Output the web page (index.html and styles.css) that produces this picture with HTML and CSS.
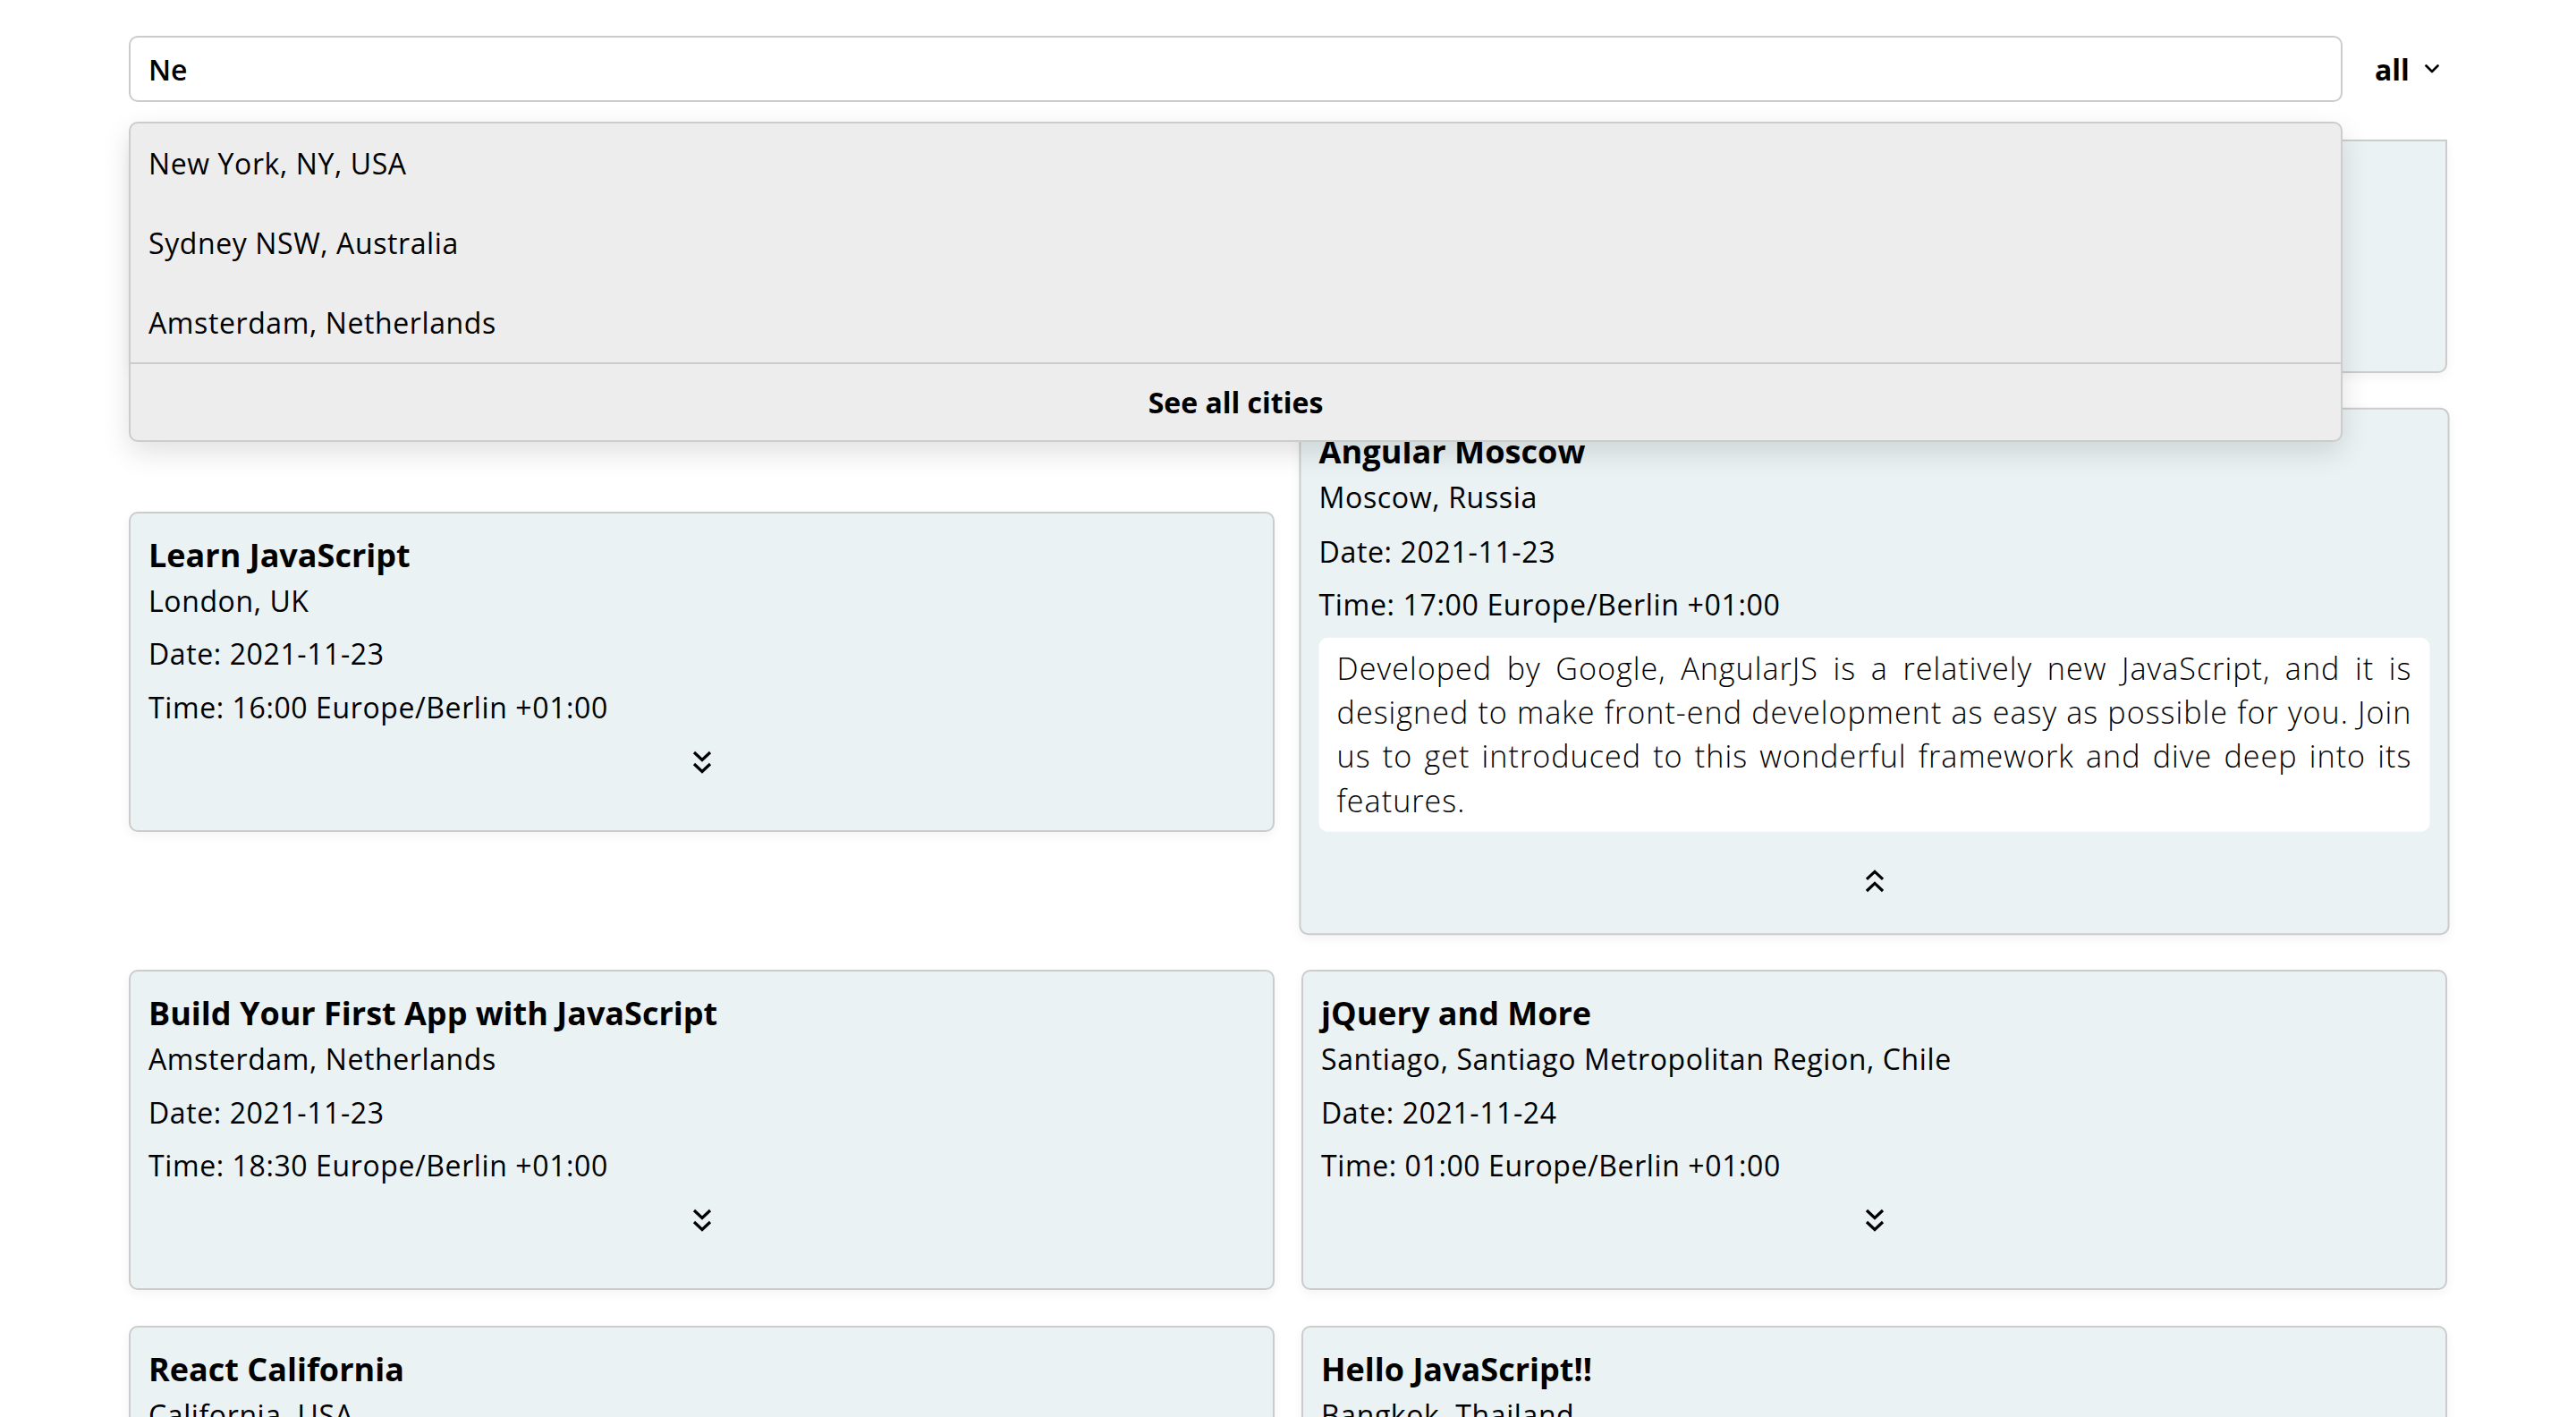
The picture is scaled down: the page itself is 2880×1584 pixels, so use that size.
FILE: index.html
```html
<!DOCTYPE html>
<html lang="en">
<head>
<meta charset="utf-8">
<title>Meetups</title>
<link rel="stylesheet" href="styles.css">
</head>
<body>
<div class="page">
  <header class="header">
    <div class="search">
      <input class="search-input" type="text" value="Ne">
      <div class="dropdown">
        <div class="option">New York, NY, USA</div>
        <div class="option">Sydney NSW, Australia</div>
        <div class="option">Amsterdam, Netherlands</div>
        <div class="see-all">See all cities</div>
      </div>
    </div>
    <div class="filter">
      <span>all</span>
      <svg class="filter-chevron" viewBox="0 0 16 10" width="16" height="10"><polyline points="1.5,1.5 8,8 14.5,1.5" fill="none" stroke="#000" stroke-width="2.6" stroke-linecap="round" stroke-linejoin="round"/></svg>
    </div>
  </header>

  <main class="list">
    <article class="card cut">
      <div class="toggle"><svg class="chev" viewBox="0 0 24 28" width="24" height="28"><polyline points="3,3 12,11.5 21,3"/><polyline points="3,16 12,24.5 21,16"/></svg></div>
    </article>
    <article class="card cut">
      <div class="toggle"><svg class="chev" viewBox="0 0 24 28" width="24" height="28"><polyline points="3,3 12,11.5 21,3"/><polyline points="3,16 12,24.5 21,16"/></svg></div>
    </article>

    <article class="card">
      <h2 class="card-title">Learn JavaScript</h2>
      <p class="card-place">London, UK</p>
      <p class="card-meta">Date: 2021-11-23</p>
      <p class="card-meta">Time: 16:00 Europe/Berlin +01:00</p>
      <div class="toggle"><svg class="chev" viewBox="0 0 24 28" width="24" height="28"><polyline points="3,3 12,11.5 21,3"/><polyline points="3,16 12,24.5 21,16"/></svg></div>
    </article>
    <article class="card open">
      <h2 class="card-title">Angular Moscow</h2>
      <p class="card-place">Moscow, Russia</p>
      <p class="card-meta">Date: 2021-11-23</p>
      <p class="card-meta">Time: 17:00 Europe/Berlin +01:00</p>
      <p class="card-desc">Developed by Google, AngularJS is a relatively new JavaScript, and it is designed to make front-end development as easy as possible for you. Join us to get introduced to this wonderful framework and dive deep into its features.</p>
      <div class="toggle up"><svg class="chev" viewBox="0 0 24 28" width="24" height="28"><polyline points="3,12 12,3.5 21,12"/><polyline points="3,25 12,16.5 21,25"/></svg></div>
    </article>

    <article class="card">
      <h2 class="card-title">Build Your First App with JavaScript</h2>
      <p class="card-place">Amsterdam, Netherlands</p>
      <p class="card-meta">Date: 2021-11-23</p>
      <p class="card-meta">Time: 18:30 Europe/Berlin +01:00</p>
      <div class="toggle"><svg class="chev" viewBox="0 0 24 28" width="24" height="28"><polyline points="3,3 12,11.5 21,3"/><polyline points="3,16 12,24.5 21,16"/></svg></div>
    </article>
    <article class="card">
      <h2 class="card-title">jQuery and More</h2>
      <p class="card-place">Santiago, Santiago Metropolitan Region, Chile</p>
      <p class="card-meta">Date: 2021-11-24</p>
      <p class="card-meta">Time: 01:00 Europe/Berlin +01:00</p>
      <div class="toggle"><svg class="chev" viewBox="0 0 24 28" width="24" height="28"><polyline points="3,3 12,11.5 21,3"/><polyline points="3,16 12,24.5 21,16"/></svg></div>
    </article>

    <article class="card">
      <h2 class="card-title">React California</h2>
      <p class="card-place">California, USA</p>
      <div class="toggle"><svg class="chev" viewBox="0 0 24 28" width="24" height="28"><polyline points="3,3 12,11.5 21,3"/><polyline points="3,16 12,24.5 21,16"/></svg></div>
    </article>
    <article class="card">
      <h2 class="card-title">Hello JavaScript!!</h2>
      <p class="card-place">Bangkok, Thailand</p>
      <div class="toggle"><svg class="chev" viewBox="0 0 24 28" width="24" height="28"><polyline points="3,3 12,11.5 21,3"/><polyline points="3,16 12,24.5 21,16"/></svg></div>
    </article>
  </main>
</div>
</body>
</html>
```

FILE: styles.css
```css
* {
  box-sizing: border-box;
}

html,
body {
  margin: 0;
  background: #ffffff;
}

body {
  font-family: "Open Sans", "Noto Sans", sans-serif;
  font-size: 32px;
  letter-spacing: 0.6px;
  color: #000000;
}

.page {
  width: 90%;
  margin: 0 auto;
  padding-top: 40px;
}

/* ---------- header ---------- */
.header {
  display: flex;
  align-items: center;
  gap: 36px;
  position: relative;
  z-index: 10;
}

.search {
  flex: 1;
  position: relative;
}

.search-input {
  display: block;
  width: 100%;
  height: 74px;
  border: 2px solid #cccccc;
  border-radius: 10px;
  padding: 0 20px;
  font-family: "Open Sans", "Noto Sans", sans-serif;
  font-size: 32px;
  font-weight: 600;
  color: #000000;
  background: #ffffff;
  outline: none;
}

.dropdown {
  position: absolute;
  top: calc(100% + 22px);
  left: 0;
  right: 0;
  background: #ededed;
  border: 2px solid #cccccc;
  border-radius: 10px;
  box-shadow: 0 12px 32px rgba(0, 0, 0, 0.12);
}

.option {
  padding: 20px 20px;
  line-height: 49px;
}

.see-all {
  border-top: 2px solid #cccccc;
  padding: 18px 20px;
  line-height: 49px;
  text-align: center;
  font-weight: 700;
  letter-spacing: 0;
}

.filter {
  flex: 0 0 81px;
  display: flex;
  align-items: center;
  justify-content: space-between;
  padding-right: 9px;
  font-weight: 700;
  letter-spacing: 0;
}

.filter-chevron {
  display: block;
}

/* ---------- list ---------- */
.list {
  display: grid;
  grid-template-columns: 1fr 1fr;
  column-gap: 30px;
  row-gap: 40px;
  align-items: center;
  margin-top: 42px;
  padding-bottom: 40px;
}

.card {
  background: #eaf2f4;
  border: 2px solid #cccccc;
  border-radius: 10px;
  padding: 20px;
  box-shadow: 0 4px 12px rgba(0, 0, 0, 0.05);
}

.card.cut {
  height: 261px;
  overflow: hidden;
  border-top-left-radius: 0;
  border-top-right-radius: 0;
  display: flex;
  flex-direction: column;
  justify-content: flex-end;
}

.card.open {
  transform: scale(1.004);
}

.card-title {
  margin: 0;
  font-size: 36px;
  font-weight: 700;
  line-height: 54px;
  letter-spacing: 0;
}

.card-place {
  margin: 0;
  line-height: 48px;
}

.card-meta {
  margin: 11.6px 0 0;
  line-height: 48px;
}

.card-desc {
  margin: 13px 0 0;
  background: #ffffff;
  border-radius: 10px;
  padding: 10px 20px;
  font-size: 34px;
  font-weight: 300;
  letter-spacing: 1px;
  line-height: 49px;
  text-align: justify;
}

.toggle {
  height: 93px;
  display: flex;
  justify-content: center;
  align-items: flex-start;
  padding-top: 23px;
}

.toggle.up {
  padding-top: 41px;
}

.chev {
  display: block;
  fill: none;
  stroke: #000000;
  stroke-width: 3.2;
  stroke-linecap: butt;
  stroke-linejoin: miter;
}
```
